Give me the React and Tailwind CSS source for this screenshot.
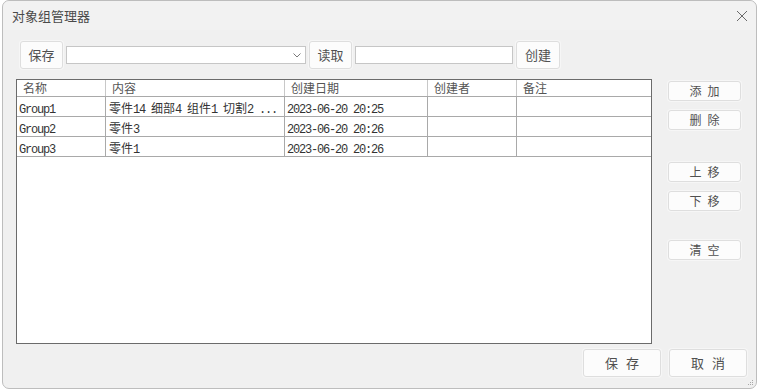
import { useState } from 'react'

const sans = { fontFamily: '"Noto Sans CJK SC", "Noto Sans", sans-serif' }
const mono = { fontFamily: '"Liberation Mono", monospace', fontSize: '12px', letterSpacing: '-1.2px' }

const columns = [
  { key: 'name', label: '名称', width: 'w-[89px]' },
  { key: 'content', label: '内容', width: 'w-[179px]' },
  { key: 'date', label: '创建日期', width: 'w-[143px]' },
  { key: 'author', label: '创建者', width: 'w-[89px]' },
  { key: 'note', label: '备注', width: 'flex-1' },
]

const groups = [
  { id: 1, name: 'Group1', content: '零件14 细部4 组件1 切割2 ...', date: '2023-06-20 20:25', author: '', note: '' },
  { id: 2, name: 'Group2', content: '零件3', date: '2023-06-20 20:26', author: '', note: '' },
  { id: 3, name: 'Group3', content: '零件1', date: '2023-06-20 20:26', author: '', note: '' },
]

const buttonClass =
  'flex items-center justify-center rounded-[3px] border border-[#dedede] bg-[#fcfcfc] text-[#505050] shadow-[0_0_0_1px_#f6f6f6]'

// latin runs get the narrow mono face, CJK stays in the sans face
function CellText({ text }) {
  const parts = text.split(/([\u4e00-\u9fff]+)/).filter(Boolean)
  return parts.map((part, i) =>
    /[\u4e00-\u9fff]/.test(part) ? (
      <span key={i} className="text-[12px]" style={sans}>
        {part}
      </span>
    ) : (
      <span key={i} style={mono} className="whitespace-pre">
        {part}
      </span>
    ),
  )
}

function SideButton({ label, className = '' }) {
  return (
    <button type="button" className={`${buttonClass} h-[20px] w-[73px] text-[12px] tracking-[6px] pl-[6px] ${className}`}>
      {label}
    </button>
  )
}

function CloseIcon() {
  return (
    <svg width="12" height="12" viewBox="0 0 12 12" className="text-[#6a6a6a]">
      <path d="M1 1 L11 11 M11 1 L1 11" stroke="currentColor" strokeWidth="1" fill="none" />
    </svg>
  )
}

function ChevronIcon() {
  return (
    <svg width="8" height="5" viewBox="0 0 8 5" className="text-[#7a7a7a]">
      <path d="M0.5 0.5 L4 4 L7.5 0.5" stroke="currentColor" strokeWidth="1" fill="none" />
    </svg>
  )
}

function GripIcon() {
  return (
    <svg width="6" height="6" viewBox="0 0 6 6" className="text-[#a8a8a8]">
      <rect x="4" y="0" width="1" height="1" fill="currentColor" />
      <rect x="2" y="2" width="1" height="1" fill="currentColor" />
      <rect x="4" y="2" width="1" height="1" fill="currentColor" />
      <rect x="0" y="4" width="1" height="1" fill="currentColor" />
      <rect x="2" y="4" width="1" height="1" fill="currentColor" />
      <rect x="4" y="4" width="1" height="1" fill="currentColor" />
    </svg>
  )
}

function GroupTable({ rows, selectedId, onSelect }) {
  return (
    <div className="h-[265px] w-[636px] border border-[#6b6b6b] bg-white">
      <div className="flex h-[17px] border-b border-[#a9a9a9] text-[12px] leading-[16px] text-[#555]" style={sans}>
        {columns.map((col, i) => (
          <div
            key={col.key}
            className={`${col.width} shrink-0 pl-[6px] ${i < columns.length - 1 ? 'border-r border-[#c8c8c8]' : ''}`}
          >
            {col.label}
          </div>
        ))}
      </div>
      {rows.map((row) => (
        <div
          key={row.id}
          onClick={() => onSelect(row.id)}
          className={`flex h-[20px] border-b border-[#a9a9a9] leading-[19px] text-[#333] ${selectedId === row.id ? 'bg-[#f4f8fd]' : ''}`}
        >
          {columns.map((col, i) => (
            <div
              key={col.key}
              className={`${col.width} shrink-0 overflow-hidden whitespace-nowrap ${col.key === 'content' ? 'pl-[3px]' : 'pl-[2px]'} ${i < columns.length - 1 ? 'border-r border-[#a9a9a9]' : ''}`}
            >
              <CellText text={row[col.key]} />
            </div>
          ))}
        </div>
      ))}
    </div>
  )
}

export default function App() {
  const [selectedId, setSelectedId] = useState(null)

  return (
    <div className="h-[390px] w-[759px] bg-white pl-[2px]" style={sans}>
      <div className="flex h-[389px] w-[755px] flex-col rounded-[7px] border border-[#bdbdbd] bg-[#f0f0f0]">
        <header className="flex h-[29px] items-center justify-between rounded-t-[7px] bg-[#f2f2f2] pl-[9px] pr-[8px]">
          <h1 className="text-[13px] text-[#4a4a4a]">对象组管理器</h1>
          <CloseIcon />
        </header>

        <div className="mt-[11px] flex items-center gap-[3px] pl-[17px]">
          <button type="button" className={`${buttonClass} h-[28px] w-[43px] text-[13px]`}>
            保存
          </button>
          <div className="flex h-[18px] w-[240px] items-center justify-end border border-[#c6c6c6] bg-white pr-[4px]">
            <ChevronIcon />
          </div>
          <button type="button" className={`${buttonClass} h-[28px] w-[43px] text-[13px]`}>
            读取
          </button>
          <input
            type="text"
            className="h-[18px] w-[158px] border border-[#c6c6c6] bg-white px-1 text-[12px] outline-none"
          />
          <button type="button" className={`${buttonClass} h-[28px] w-[44px] text-[13px]`}>
            创建
          </button>
        </div>

        <div className="mt-[10px] flex pl-[13px]">
          <GroupTable rows={groups} selectedId={selectedId} onSelect={setSelectedId} />
          <div className="ml-[16px] flex flex-col pt-[2px]">
            <SideButton label="添加" />
            <SideButton label="删除" className="mt-[9px]" />
            <SideButton label="上移" className="mt-[32px]" />
            <SideButton label="下移" className="mt-[9px]" />
            <SideButton label="清空" className="mt-[29px]" />
          </div>
        </div>

        <div className="mt-[5px] flex justify-end gap-[8px] pr-[9px]">
          <button type="button" className={`${buttonClass} h-[28px] w-[78px] pl-[8px] text-[13px] tracking-[8px]`}>
            保存
          </button>
          <button type="button" className={`${buttonClass} h-[28px] w-[78px] pl-[8px] text-[13px] tracking-[8px]`}>
            取消
          </button>
        </div>

        <div className="mt-auto flex justify-end pb-[2px] pr-[2px]">
          <GripIcon />
        </div>
      </div>
    </div>
  )
}
